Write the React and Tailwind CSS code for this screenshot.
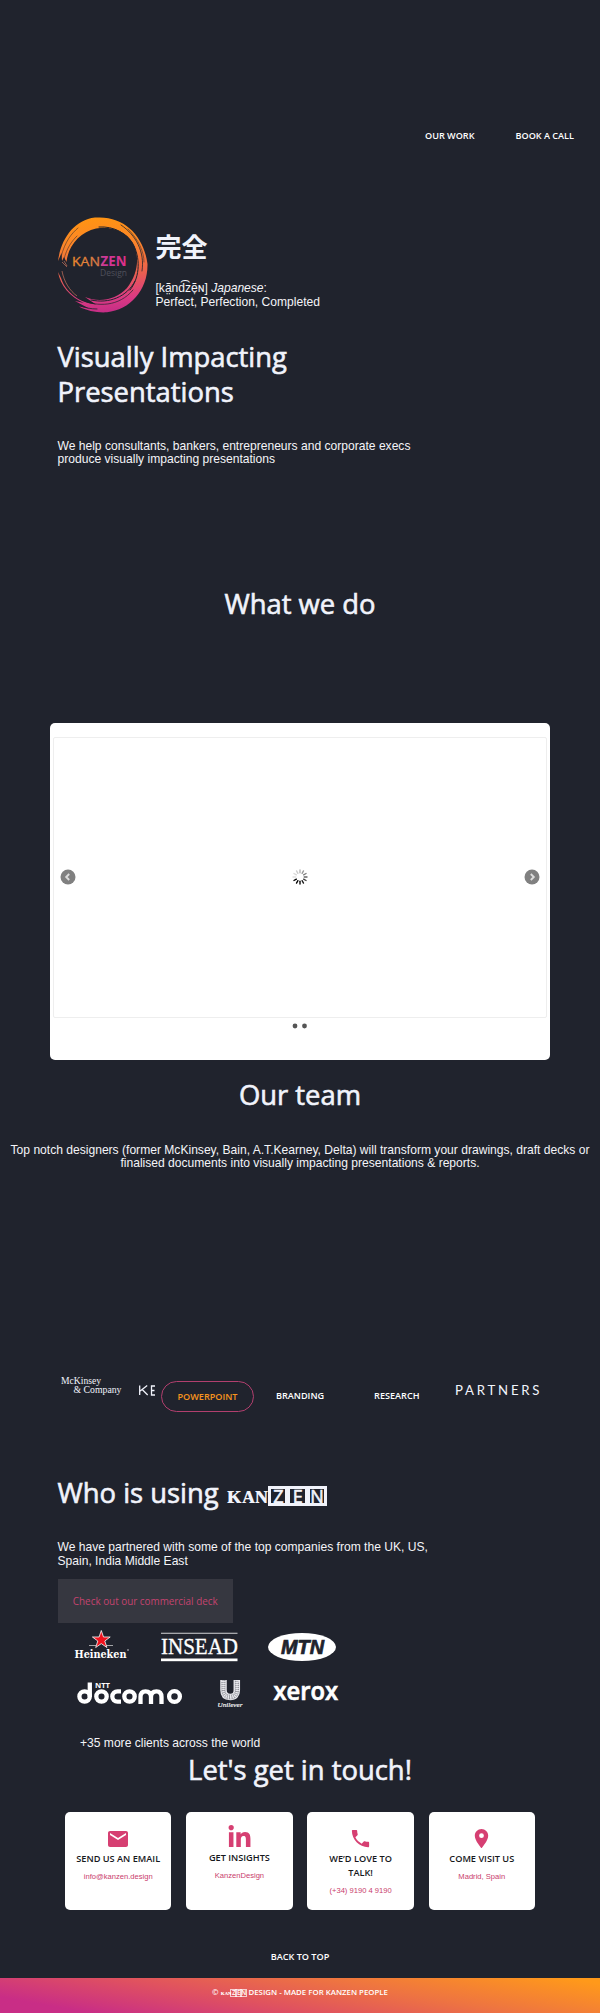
import { MdEmail, MdPhone, MdLocationOn } from "react-icons/md";
import { FaLinkedinIn } from "react-icons/fa";

const heading = "font-['Open_Sans'] font-medium text-[27.400px] leading-[35px] text-[#f1f3fb] whitespace-nowrap [-webkit-text-stroke:0.600px_#f1f3fb]";
const body = "font-['Liberation_Sans'] text-[12.090px] leading-[13.700px] text-[#f4f4f8] whitespace-nowrap";
const link = "font-['Open_Sans'] font-semibold text-[9.100px] leading-[12px] text-white whitespace-nowrap";

function KanzenLogo() {
  return (
    <svg width="92" height="96" viewBox="0 0 92 96" className="-ml-px block shrink-0">
      <defs>
        <linearGradient id="ring" gradientUnits="userSpaceOnUse" x1="40" y1="0" x2="46" y2="96">
          <stop offset="0" stopColor="#ff9412" />
          <stop offset="0.28" stopColor="#fb8529" />
          <stop offset="0.6" stopColor="#e9604e" />
          <stop offset="0.85" stopColor="#db3a83" />
          <stop offset="1" stopColor="#c42d86" />
        </linearGradient>
        <linearGradient id="word" gradientUnits="userSpaceOnUse" x1="15" y1="0" x2="70" y2="0">
          <stop offset="0" stopColor="#f08a2c" />
          <stop offset="0.5" stopColor="#d97a4a" />
          <stop offset="0.56" stopColor="#c9379c" />
          <stop offset="1" stopColor="#de2f86" />
        </linearGradient>
      </defs>
      <path
        fill="url(#ring)"
        d="M1 44C4 22 17 3 38 .6C67-2 87 19 90.500 47C91 73 73 93 50 95.300C41 96 30 94 22 89.500L32 91.500L18 84L27 86C13 80 3 68 1 55L4 61C9 76 23 86 39 87.500L28 80C42 86 59 83 70 71C81 57 83 40 76 26C68 13 53 9 39 11.500C23 15 11 29 9.500 45L7 40L5 44L4.500 36Z"
      />
      <g fill="none" stroke="#20232d" strokeLinecap="round">
        <path d="M42 10C57 9 70 16 77 29C84 44 82 62 73 73" strokeWidth="1" />
        <path d="M64 8C79 18 88 35 85 54" strokeWidth=".8" />
        <path d="M71 12C82 23 87 35 87 45" strokeWidth=".5" />
        <path d="M78 64C70 80 52 87 34 83" strokeWidth="1" />
        <path d="M76 73C62 90 40 90 25 83" strokeWidth=".7" />
        <path d="M22 88C28 91 34 92 40 92" strokeWidth=".8" />
        <path d="M4 40C8 24 15 16 21 11M7 42C10 31 14 25 20 19" strokeWidth=".5" />
      </g>
      <g fill="none" stroke="#e38164" strokeWidth=".6">
        <path d="M5 45L10 50M7 44L10 49M5 54C7 65 13 74 20 79" />
      </g>
      <text x="15" y="48.500" fontFamily="Open Sans" fontSize="13.300" fill="url(#word)" stroke="url(#word)" strokeWidth=".3" textLength="28" lengthAdjust="spacingAndGlyphs">KAN</text>
      <text x="43.500" y="48.500" fontFamily="Open Sans" fontSize="13.300" fill="url(#word)" fontWeight="700" textLength="26" lengthAdjust="spacingAndGlyphs">ZEN</text>
      <text x="43" y="58.500" fontFamily="Open Sans" fontSize="8.500" fill="#4f505b" textLength="27" lengthAdjust="spacingAndGlyphs">Design</text>
    </svg>
  );
}

function Spinner() {
  return (
    <svg width="16" height="16" viewBox="-8 -8 16 16">
      {Array.from({ length: 12 }, (_, i) => (
        <line key={i} y1="-4.200" y2="-7" stroke="#000" strokeWidth="1.350" strokeLinecap="round"
          transform={`rotate(${i * 30})`} opacity={[0.3, 0.4, 0.5, 0.6, 0.75, 0.9, 1, 1, 1, 0.12, 0.15, 0.2][i]} />
      ))}
    </svg>
  );
}

function Arrow({ flip }) {
  return (
    <svg width="16" height="16" viewBox="0 0 16 16" className={flip ? "rotate-180" : ""}>
      <circle cx="8" cy="8" r="7.500" fill="#808080" />
      <path d="M9.200 5L6.200 8L9.200 11" fill="none" stroke="#dcdcdc" strokeWidth="1.900" />
    </svg>
  );
}

function Dots() {
  return (
    <svg width="16" height="6" viewBox="0 0 16 6" className="mt-[5.500px] block" fill="#555">
      <circle cx="3" cy="3" r="2.400" />
      <circle cx="12.500" cy="3" r="2.400" />
    </svg>
  );
}

function ClientLogos() {
  return (
    <svg width="280" height="80" viewBox="70 1628 280 80" className="block" fill="#fff">
      <path d="M89 1645.500H96M106 1645.500H113" stroke="#ddd" strokeWidth=".7" />
      <path d="M101.300 1630.500L103.500 1637H110.200L104.800 1641L106.900 1647.500L101.300 1643.600L95.700 1647.500L97.800 1641L92.400 1637H99.100Z" fill="#f0121d" stroke="#fff" strokeWidth=".8" />
      <text x="74.500" y="1658" fontFamily="DejaVu Serif Condensed, DejaVu Serif" fontWeight="700" fontSize="10.700" textLength="52" lengthAdjust="spacingAndGlyphs">Heineken</text>
      <circle cx="128" cy="1650" r=".7" />
      <rect x="161" y="1632.800" width="76.500" height=".8" />
      <text x="161" y="1654" fontFamily="Liberation Serif" fontSize="24" textLength="77" lengthAdjust="spacingAndGlyphs" stroke="#fff" strokeWidth=".35">INSEAD</text>
      <rect x="161" y="1658.500" width="76.500" height="2.700" />
      <ellipse cx="302" cy="1647" rx="34" ry="14" />
      <text x="281" y="1654" fontFamily="Liberation Sans" fontWeight="700" fontStyle="italic" fontSize="19.500" fill="#20232d" stroke="#20232d" strokeWidth=".7" textLength="43" lengthAdjust="spacingAndGlyphs">MTN</text>
      <g fill="none" stroke="#fff" strokeWidth="4.300">
        <circle cx="84.600" cy="1696.500" r="5.200" />
        <path d="M89.800 1682.500V1697" />
        <circle cx="101.500" cy="1696.500" r="5.200" />
        <path d="M121 1691.300H117.500A5.200 5.200 0 0 0 117.500 1701.700H121" />
        <circle cx="129.500" cy="1696.500" r="5.200" />
        <path d="M140.500 1704V1697Q140.500 1691.300 145.500 1691.300Q151 1691.300 151 1697V1704M151 1697Q151 1691.300 156.500 1691.300Q161.500 1691.300 161.500 1697V1704" />
        <circle cx="174.500" cy="1696.500" r="5.400" />
      </g>
      <text x="95" y="1687.500" fontFamily="Open Sans" fontWeight="700" fontSize="6.600" textLength="15" lengthAdjust="spacingAndGlyphs">NTT</text>
      <path d="M223.500 1680V1690Q223.500 1697 230.200 1697T236.800 1690V1680" fill="none" stroke="#e9e9ee" strokeWidth="6.500" />
      <path d="M223.500 1680V1690Q223.500 1697 230.200 1697T236.800 1690V1680" fill="none" stroke="#20232d" strokeWidth="3.500" strokeDasharray=".6 1.400" opacity=".5" />
      <path d="M225 1680V1690Q225 1695 230.200 1695T235.300 1690V1680M221.800 1682V1690Q222 1699 230.200 1699T238.500 1690V1682" fill="none" stroke="#20232d" strokeWidth=".8" strokeDasharray="1.300 .8" opacity=".4" />
      <text x="217.500" y="1707" fontFamily="Liberation Serif" fontStyle="italic" fontSize="6.900" textLength="25" lengthAdjust="spacingAndGlyphs" stroke="#fff" strokeWidth=".15">Unilever</text>
      <text x="273.500" y="1700" fontFamily="Open Sans" fontWeight="600" fontSize="24.500" textLength="64.500" lengthAdjust="spacingAndGlyphs" stroke="#fff" strokeWidth=".7">xerox</text>
    </svg>
  );
}

function ContactCard({ icon, title, sub, lift }) {
  return (
    <div className={`flex h-[98px] w-[106.500px] flex-col items-center rounded-[5px] bg-white ${lift ? "pt-[13px]" : "pt-[14px]"}`}>
      <div className="flex h-[25px] items-center text-[#d63f72]">{icon}</div>
      <div className="pt-[1px] text-center font-['Open_Sans'] text-[9.200px] font-semibold leading-[13.700px] text-[#17181c] whitespace-pre">{title}</div>
      <div className="pt-[4.500px] font-['Liberation_Sans'] text-[7.600px] leading-[13.700px] text-[#c93d6c] whitespace-nowrap">{sub}</div>
    </div>
  );
}

function Brand() {
  return (
    <span className="ml-[8px] inline-flex items-baseline">
      <span className="font-['Liberation_Serif'] font-bold text-[25px] leading-[20px] [-webkit-text-stroke:0]">ᴋᴀɴ</span>
      <span className="inline-flex">
        {["Z", "E", "N"].map((c) => (
          <span key={c} className="-mr-px -mt-[2px] mb-[-2px] inline-flex h-[19.500px] w-[20.400px] items-center justify-center border-[3px] border-[#f1f3fb] text-[18px] font-normal leading-[14px]">{c}</span>
        ))}
      </span>
    </span>
  );
}

export default function App() {
  return (
    <div className="flex h-[2013px] w-[600px] flex-col overflow-hidden bg-[#20232d]">
      <nav className="flex h-[217px] shrink-0 items-start justify-end gap-[41px] pr-[26px] pt-[130px]">
        <a className={link}>OUR WORK</a>
        <a className={link}>BOOK A CALL</a>
      </nav>
      <header className="h-[369px] shrink-0 pl-[57.500px]">
        <div className="flex h-[122px] gap-[7px]">
          <KanzenLogo />
          <div>
            <div className="h-[65px] pt-[10px] font-['Noto_Sans_CJK_JP'] text-[26px] font-bold leading-[38px] text-[#f1f3fb]">完全</div>
            <p className={body}>[kã̤nd͡zẽ̞ɴ] <i>Japanese</i>:</p>
            <p className={body}>Perfect, Perfection, Completed</p>
          </div>
        </div>
        <h1 className={heading}>Visually Impacting<br />Presentations</h1>
        <p className={`${body} pt-[30.500px]`}>We help consultants, bankers, entrepreneurs and corporate execs<br />produce visually impacting presentations</p>
      </header>
      <section className="h-[491px] shrink-0">
        <h2 className={`${heading} text-center`}>What we do</h2>
        <div className="mx-auto mt-[101.500px] flex h-[337.500px] w-[500px] flex-col items-center rounded-[5px] bg-white pt-[14px]">
          <div className="flex h-[281px] w-[494px] items-center justify-between rounded-[2px] border border-[#eeeeee] px-[6px]">
            <Arrow />
            <Spinner />
            <Arrow flip />
          </div>
          <Dots />
        </div>
      </section>
      <section className="h-[298px] shrink-0 text-center">
        <h2 className={heading}>Our team</h2>
        <p className={`${body} pt-[31.500px]`}>Top notch designers (former McKinsey, Bain, A.T.Kearney, Delta) will transform your drawings, draft decks or<br />finalised documents into visually impacting presentations &amp; reports.</p>
      </section>
      <section className="flex h-[94px] shrink-0 items-start pl-[61px]">
        <svg width="100" height="24" viewBox="61 1375 100 24" fill="#f1f3fb" className="shrink-0">
          <text x="61" y="1383.500" fontFamily="Liberation Serif" fontSize="9.500" textLength="40" lengthAdjust="spacingAndGlyphs">McKinsey</text>
          <text x="73.500" y="1393" fontFamily="Liberation Serif" fontSize="9.500" textLength="48" lengthAdjust="spacingAndGlyphs">&amp; Company</text>
          <path d="M139.700 1385.500V1395M147.200 1385.500L140.200 1391M142.200 1389.500L147.700 1395M155 1386H151.500V1395H155M151.500 1390.500H154.500" fill="none" stroke="#f1f3fb" strokeWidth="1.300" />
        </svg>
        <div className="mt-[6px] flex h-[31px] w-[93px] items-center justify-center rounded-full border border-[#b23f6e]">
          <a className={`${link} !text-[#f7941e]`}>POWERPOINT</a>
        </div>
        <a className={`${link} ml-[22px] mt-[14.500px]`}>BRANDING</a>
        <a className={`${link} ml-[50px] mt-[14.500px]`}>RESEARCH</a>
        <svg width="87" height="24" viewBox="455 1375 87 24" className="ml-[34.500px] shrink-0" fill="#f1f3fb">
          <text x="456" y="1395" fontFamily="Lato" fontSize="13.200" textLength="84.500">PARTNERS</text>
        </svg>
      </section>
      <section className="h-[283px] shrink-0 pl-[57.500px] pt-[6px]">
        <h2 className={`${heading} h-[35px]`}>Who is using<Brand /></h2>
        <p className={`${body} pt-[31px]`}>We have partnered with some of the top companies from the UK, US,<br />Spain, India Middle East</p>
        <button className="mt-[10.500px] block h-[44px] w-[175.500px] bg-[#363740] font-['Open_Sans'] text-[9.900px] leading-[14px] text-[#c4436f] whitespace-nowrap">Check out our commercial deck</button>
        <div className="ml-[12.500px] mt-[5px]"><ClientLogos /></div>
        <p className={`${body} ml-[22.500px] mt-[29px]`}>+35 more clients across the world</p>
      </section>
      <section className="h-[226px] shrink-0">
        <h2 className={`${heading} text-center`}>Let's get in touch!</h2>
        <div className="mt-[25px] flex justify-center gap-[14.700px]">
          <ContactCard icon={<MdEmail size={24} />} title="SEND US AN EMAIL" sub="info@kanzen.design" />
          <ContactCard lift icon={<FaLinkedinIn size={25} />} title="GET INSIGHTS" sub="KanzenDesign" />
          <ContactCard icon={<MdPhone size={23} />} title={"WE’D LOVE TO\nTALK!"} sub="(+34) 9190 4 9190" />
          <ContactCard icon={<MdLocationOn size={23} />} title="COME VISIT US" sub="Madrid, Spain" />
        </div>
        <div className={`${link} mt-[40.500px] text-center`}>BACK TO TOP</div>
      </section>
      <footer className="flex h-[36px] shrink-0 justify-center bg-[linear-gradient(10deg,#c92d86_12%,#e0525f_40%,#ee7441_65%,#ff991a_96%)] pt-[8px]">
        <p className="flex h-[12px] items-baseline font-['Open_Sans'] text-[7.850px] font-semibold leading-[12px] text-white whitespace-pre">
          © <span className="font-['Liberation_Serif'] text-[6.500px]">ᴋᴀɴ</span>
          {["Z", "E", "N"].map((c) => (
            <span key={c} className="inline-flex h-[6px] w-[5px] items-center justify-center text-[6.500px] leading-[6px] outline-[0.500px] outline-white/70">{c}</span>
          ))}
          {" DESIGN - MADE FOR KANZEN PEOPLE"}
        </p>
      </footer>
    </div>
  );
}
